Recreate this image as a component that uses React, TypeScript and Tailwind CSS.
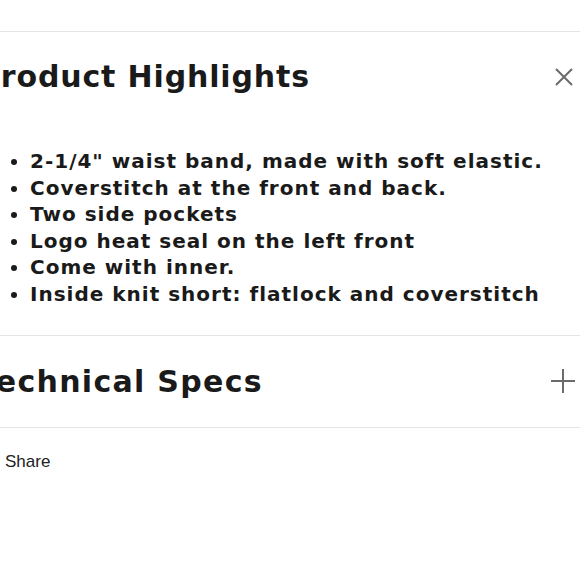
import React from 'react';

const HIGHLIGHTS = [
  '2-1/4" waist band, made with soft elastic.',
  'Coverstitch at the front and back.',
  'Two side pockets',
  'Logo heat seal on the left front',
  'Come with inner.',
  'Inside knit short: flatlock and coverstitch',
];

const WIDE = { fontFamily: '"DejaVu Sans", sans-serif' };

export default function App() {
  return (
    <div className="w-[580px] h-[580px] overflow-hidden bg-white">
      <div className="pt-[31px] -ml-[22px] w-[602px]">
        {/* Product Highlights — open */}
        <section className="border-t border-[#e5e5e5]">
          <div className="flex items-center justify-between h-[90px] pr-[6px]">
            <h2 className="text-[30px] font-semibold text-[#1a1a1a] tracking-[0.85px] -mt-[2px]" style={WIDE}>
              Product Highlights
            </h2>
            <svg width="20" height="20" viewBox="0 0 20 20" className="text-[#6b6b6b]">
              <path d="M2 2 L18 18 M18 2 L2 18" stroke="currentColor" strokeWidth="2" />
            </svg>
          </div>
          <ul
            className="list-disc pl-[52px] pt-[26px] pb-[27px] text-[20px] leading-[26.6px] text-[#1a1a1a] font-semibold tracking-[1px]"
            style={WIDE}
          >
            {HIGHLIGHTS.map((h) => (
              <li key={h}>{h}</li>
            ))}
          </ul>
        </section>

        {/* Technical Specs — closed */}
        <section className="border-t border-[#e5e5e5]">
          <div className="flex items-center justify-between h-[91px] pr-[5px]">
            <h2 className="text-[30px] font-semibold text-[#1a1a1a] tracking-[1.3px]" style={WIDE}>
              Technical Specs
            </h2>
            <svg width="24" height="24" viewBox="0 0 24 24" className="text-[#6b6b6b]">
              <path d="M12 0 V24 M0 12 H24" stroke="currentColor" strokeWidth="2" />
            </svg>
          </div>
        </section>

        <div className="border-t border-[#e5e5e5] pt-[21px] pl-[27px]">
          <span className="text-[17px] text-[#222]" style={{ fontFamily: '"Liberation Sans", Arial, sans-serif' }}>
            Share
          </span>
        </div>
      </div>
    </div>
  );
}
